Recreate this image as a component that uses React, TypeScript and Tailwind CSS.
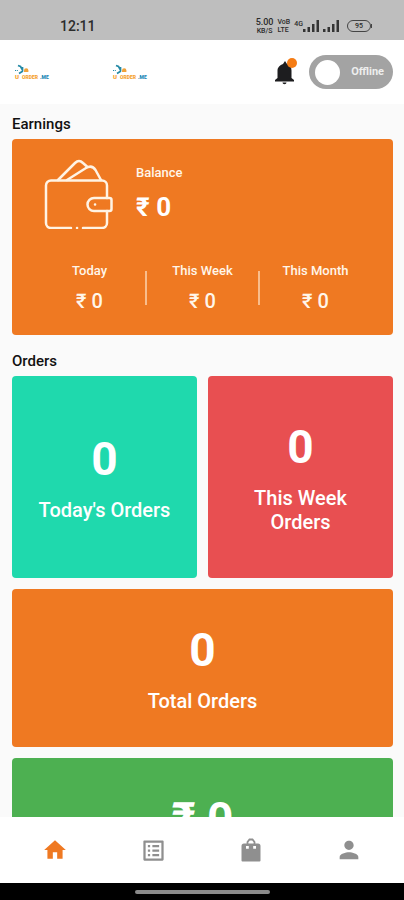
import React from "react";
import { MdHome, MdListAlt, MdPerson } from "react-icons/md";

const font = "font-[Roboto,'Noto_Sans',sans-serif]";

function Logo() {
  return (
    <svg viewBox="0 0 36 16" className="h-4 w-9" role="img" aria-label="U-Order.me">
      <g fill="none" stroke="#2389a5" strokeWidth="1.700">
        <path d="M4 1.500l2.500 1 2 3.500M5 9.500l4-2.500M8.500 3v4" />
        <path d="M1 6.500h3" strokeDasharray="1.200 1" strokeWidth="1.200" />
      </g>
      <path d="M10 6.500a2.200 2.200 0 0 1 4.400 0V8H10z" fill="#efa23a" />
      <text x="1" y="15" fontSize="6" fontWeight="900" fill="#f5a12c">U</text>
      <text x="8" y="15" fontSize="5" fontWeight="900" fill="#f5a12c">ORDER</text>
      <text x="26" y="15" fontSize="5" fontWeight="900" fill="#2389b5">.ME</text>
    </svg>
  );
}

function Signal() {
  return (
    <svg viewBox="0 0 16 12" className="h-3 w-4" fill="#333" aria-hidden="true">
      <path d="M0 9h2.500v3H0zM4.500 7H7v5H4.500zM9 4h2.500v8H9zM13.500 0H16v12h-2.500z" />
    </svg>
  );
}

function StatusBar() {
  return (
    <div className="flex h-10 shrink-0 items-center justify-between bg-[#bebebe] pt-3 pr-8 pl-15 text-[#2b2b2b]">
      <span className="text-sm font-medium">12:11</span>
      <div className="flex items-center gap-1 text-[7px] leading-[8px] font-medium">
        <span className="text-center">
          <span className="block text-[9px] leading-[9px]">5.00</span>
          <span className="block">KB/S</span>
        </span>
        <span>
          <span className="block">VoB</span>
          <span className="block">LTE</span>
        </span>
        <span className="flex items-start">
          <span>4G</span>
          <Signal />
        </span>
        <Signal />
        <span className="ml-1 flex items-center">
          <span className="flex h-3 w-6 items-center justify-center rounded-full border border-[#444]">95</span>
          <span className="h-1 w-px bg-[#444]" />
        </span>
      </div>
    </div>
  );
}

function Bell() {
  return (
    <button type="button" aria-label="Notifications" className="relative h-7 w-6">
      <svg viewBox="0 0 24 28" className="h-7 w-6" fill="#1d1d1f" aria-hidden="true">
        <path d="M10 6L12 3l2 3c3 1 4.500 3.500 4.500 6.500V20l2.500 2v1.500H2V22l2.500-2v-7.500C4.500 9.500 7 7 10 6z" />
        <path d="M9.500 24.500h4a2 1.800 0 0 1-4 0z" />
      </svg>
      <span className="absolute top-0 right-0 size-2.5 rounded-full bg-[#f57c14]" />
    </button>
  );
}

function Header() {
  return (
    <header className="flex h-16 shrink-0 items-center justify-between bg-white pr-[11px] pl-[14px]">
      <div className="flex items-center gap-[62px]">
        <Logo />
        <Logo />
      </div>
      <div className="flex items-center gap-3">
        <Bell />
        <button
          type="button"
          role="switch"
          aria-checked="false"
          className="flex h-[34px] w-[84px] items-center justify-between rounded-full bg-[#a3a3a3] pr-[9px] pl-1.5 text-[11px] font-bold text-[#eee]"
        >
          <span className="size-[25px] rounded-full bg-white" />
          Offline
        </button>
      </div>
    </header>
  );
}

function Wallet() {
  return (
    <svg viewBox="0 0 70 70" className="h-[70px] w-[70px] shrink-0" fill="none" stroke="#fff3e4" strokeWidth="2.500" strokeLinecap="round" strokeLinejoin="round" aria-hidden="true">
      <path d="M27 69H7a5 5 0 0 1-5-5V26.500a5 5 0 0 1 5-5h51a5 5 0 0 1 5 5V39M63 52v12a5 5 0 0 1-5 5H39" />
      <path d="M14 21L31 4q4-4 8 0l4.500 4M23 21L42 9q6-3.500 9.500 2l5.500 10" />
      <path d="M50 39h15.500a2 2 0 0 1 2 2v9a2 2 0 0 1-2 2H50a6.500 6.500 0 0 1 0-13z" />
      <path d="M51 45.500h.1M33 69h.1" />
    </svg>
  );
}

function Period({ label }: { label: string }) {
  return (
    <div className="flex-1 text-center">
      <p className="text-[13px] leading-5 font-medium">{label}</p>
      <p className="mt-1.5 text-xl leading-7 font-medium">₹ 0</p>
    </div>
  );
}

function Earnings() {
  return (
    <section className="rounded bg-[#ef7922] py-5 text-[#fff6ea]">
      <div className="flex gap-[22px] pl-8">
        <Wallet />
        <div>
          <p className="mt-1 text-[13px] leading-5 font-medium">Balance</p>
          <p className="mt-2 text-[26px] leading-8 font-bold text-white">₹ 0</p>
        </div>
      </div>
      <div className="mt-8 flex items-center px-[22px]">
        <Period label="Today" />
        <span className="h-[34px] w-0.5 bg-[#f9bd8c]" />
        <Period label="This Week" />
        <span className="h-[34px] w-0.5 bg-[#f9bd8c]" />
        <Period label="This Month" />
      </div>
    </section>
  );
}

function Stat({ value, label, className }: { value: string; label: string; className: string }) {
  return (
    <section className={`flex flex-col items-center justify-center gap-3 rounded px-6 text-center text-white ${className}`}>
      <p className="text-[46px] leading-[54px] font-bold">{value}</p>
      <p className="text-xl leading-6 font-medium">{label}</p>
    </section>
  );
}

function Bag() {
  return (
    <svg viewBox="0 0 24 24" className="size-6" aria-hidden="true">
      <path d="M8.500 6V4l2-2.500h3l2 2.500v2" fill="none" stroke="#8f8f8f" strokeWidth="1.800" />
      <path d="M5 5.500h14a2.500 2.500 0 0 1 2.500 2.500V22.500a1 1 0 0 1-1 1h-17a1 1 0 0 1-1-1V8A2.500 2.500 0 0 1 5 5.500z" fill="#8f8f8f" />
      <path d="M7 8h2.800v2.800H7zM14.200 8H17v2.800h-2.800z" fill="#fff" />
    </svg>
  );
}

export default function App() {
  return (
    <div className={`flex h-screen flex-col bg-[#fafafa] text-[#111] ${font}`}>
      <StatusBar />
      <Header />
      <main className="min-h-0 flex-1 overflow-hidden pr-[11px] pl-3">
        <h2 className="pt-2.5 pb-[5px] text-[15px] leading-5 font-medium">Earnings</h2>
        <Earnings />
        <h2 className="pt-4 pb-[5px] text-[15px] leading-5 font-medium">Orders</h2>
        <div className="grid grid-cols-2 gap-[11px]">
          <Stat value="0" label="Today's Orders" className="h-[202px] bg-[#1fd9ad]" />
          <Stat value="0" label="This Week Orders" className="h-[202px] bg-[#e84f51]" />
          <Stat value="0" label="Total Orders" className="col-span-2 h-[158px] bg-[#ef7922]" />
          <Stat value="₹ 0" label="Total Earnings" className="col-span-2 h-[158px] bg-[#4db051]" />
        </div>
      </main>
      <nav className="flex h-[66px] shrink-0 items-center bg-white px-[6px] text-[#8f8f8f]">
        <a href="#home" aria-label="Home" className="flex flex-1 justify-center text-[#ef7922]">
          <MdHome size={26} />
        </a>
        <a href="#orders" aria-label="Orders" className="flex flex-1 justify-center">
          <MdListAlt size={27} />
        </a>
        <a href="#products" aria-label="Products" className="flex flex-1 justify-center">
          <Bag />
        </a>
        <a href="#profile" aria-label="Profile" className="flex flex-1 justify-center">
          <MdPerson size={28} />
        </a>
      </nav>
      <div className="flex h-[17px] shrink-0 items-center justify-center bg-black">
        <span className="h-1 w-[135px] rounded-full bg-[#8a8a8a]" />
      </div>
    </div>
  );
}
